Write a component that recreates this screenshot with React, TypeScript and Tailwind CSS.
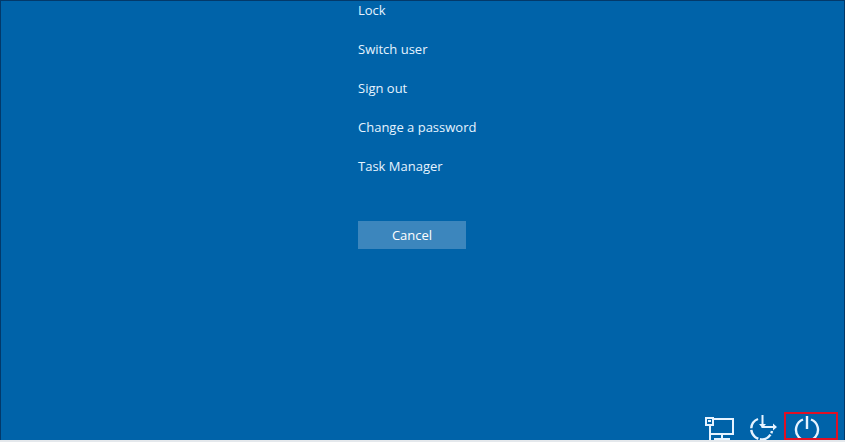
const actions = ["Lock", "Switch user", "Sign out", "Change a password", "Task Manager"];

export default function App() {
  return (
    <div className="h-screen bg-[#e4e8ec] pb-[2px] font-['Open_Sans','Noto_Sans',sans-serif] text-[13px] leading-[18px] text-[#e6f3ff]">
      <main className="flex h-full flex-col justify-between overflow-hidden border-x border-t border-[#03396a] bg-[#0063a9]">
        <div className="mx-auto w-[129px]">
          <ul className="flex flex-col gap-[21px]">
            {actions.map((action) => (
              <li key={action} className="flex">
                <button type="button" className="whitespace-nowrap">{action}</button>
              </li>
            ))}
          </ul>
          <button type="button" className="mt-[46px] block h-7 w-[108px] bg-[#3c86bd] font-medium text-white">
            Cancel
          </button>
        </div>
        <div className="flex items-end justify-end pr-[6px]">
          <button type="button" aria-label="Network" className="mr-[14px]">
            <svg className="block" width="30" height="24" viewBox="0 0 30 24" fill="none" stroke="#e6f3ff" strokeWidth="2">
              <path d="M9 3H28V18H5M17 18V23M9 23H25" />
              <path d="M1 2H8V9H1ZM5 9V24" />
              <path d="M3 5H6" />
            </svg>
          </button>
          <button type="button" aria-label="Ease of access" className="mr-[5px]">
            <svg className="block" width="30" height="26" viewBox="0 0 30 26" fill="none" stroke="#e6f3ff" strokeWidth="2.4">
              <path d="M9 5A10.5 10.5 0 1 0 23 17" strokeDasharray="12 1.5" />
              <path d="M13.5 1V13H26" strokeWidth="2" />
              <path d="M10 10H17L13.5 14ZM24 9.5V16.5L28 13Z" fill="#e6f3ff" stroke="none" />
            </svg>
          </button>
          <button type="button" aria-label="Power" className="flex h-7 w-[54px] justify-center overflow-hidden border-2 border-[#e01024] pr-2">
            <svg className="mt-px block shrink-0" width="28" height="28" viewBox="0 0 28 28" fill="none" stroke="#e6f3ff" strokeWidth="2.4">
              <path d="M10 4.5A11 11 0 1 0 18 4.5M14 1V14" />
            </svg>
          </button>
        </div>
      </main>
    </div>
  );
}
